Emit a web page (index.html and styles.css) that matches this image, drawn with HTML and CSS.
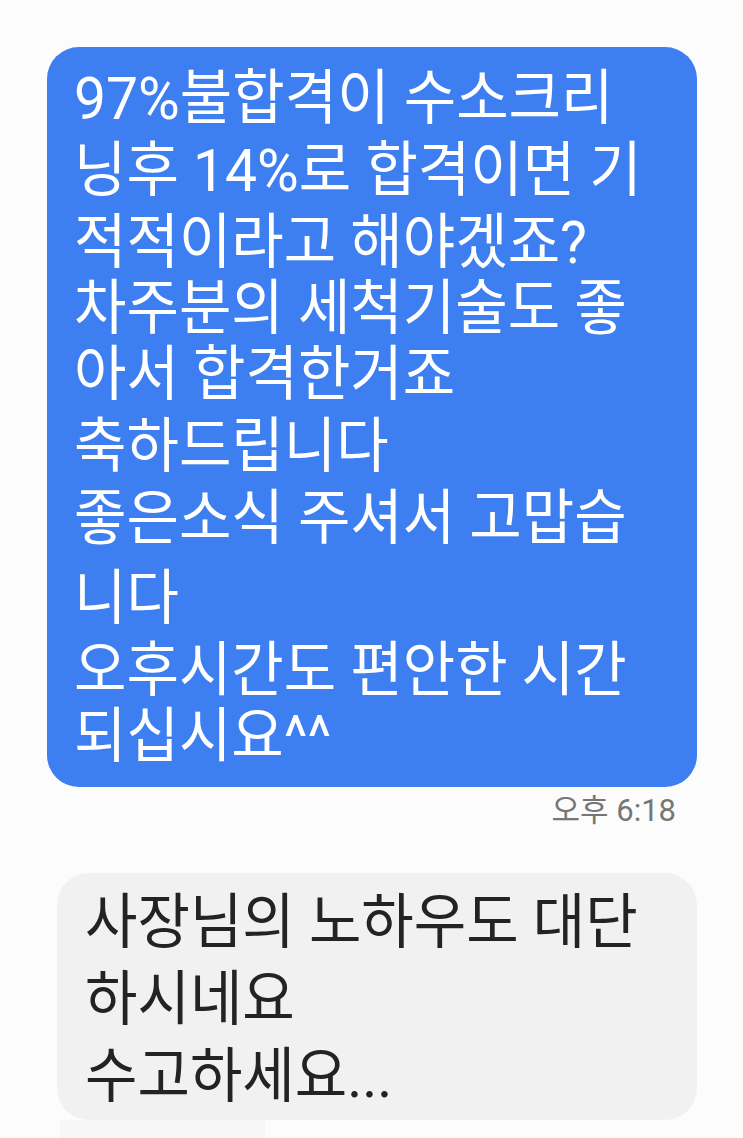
FILE: index.html
```html
<!DOCTYPE html>
<html lang="ko">

<head>
    <meta charset="UTF-8">
    <meta name="viewport" content="width=device-width, initial-scale=1.0">
    <title>문자 대화</title>
    <link rel="stylesheet" href="styles.css">
</head>

<body>

    <div class="chat">

        <!-- Sent message -->
        <div class="bubble sent">
            <div class="line">97%불합격이 수소크리</div>
            <div class="line">닝후 14%로 합격이면 기</div>
            <div class="line tight">적적이라고 해야겠죠?</div>
            <div class="line tight">차주분의 세척기술도 좋</div>
            <div class="line">아서 합격한거죠</div>
            <div class="line">축하드립니다</div>
            <div class="line loose">좋은소식 주셔서 고맙습</div>
            <div class="line">니다</div>
            <div class="line tight">오후시간도 편안한 시간</div>
            <div class="line">되십시요^^</div>
        </div>
        <div class="time">오후 6:18</div>

        <!-- Received message -->
        <div class="bubble received">
            <div class="line">사장님의 노하우도 대단</div>
            <div class="line">하시네요</div>
            <div class="line">수고하세요...</div>
        </div>
        <div class="strip"></div>

    </div>

</body>

</html>
```

FILE: styles.css
```css
html, body {
    margin: 0;
    padding: 0;
    height: 100%;
    overflow: hidden;
}

body {
    background-color: #fcfcfc;
    font-family: Roboto, "Noto Sans CJK KR", sans-serif;
}

.chat {
    display: flex;
    flex-direction: column;
    padding-top: 47px;
}

.bubble {
    box-sizing: border-box;
    border-radius: 32px;
    font-size: 57px;
}

.line {
    white-space: nowrap;
    transform: scaleY(1.05);
}

/* Blue bubble on the right */
.sent {
    margin-left: 47px;
    width: 650px;
    height: 740px;
    padding: 16px 20px 0 27px;
    background-color: #3d7ff0;
    color: #fff;
}

.sent .line {
    height: 72px;
    line-height: 72px;
}

/* the screenshot's lines are not evenly spaced */
.sent .line.tight {
    height: 66px;
}

.sent .line.loose {
    height: 80px;
}

.time {
    align-self: flex-end;
    margin-right: 67px;
    margin-top: 9px;
    height: 30px;
    line-height: 30px;
    font-size: 31px;
    color: #767676;
}

/* Grey bubble on the left */
.received {
    margin-top: 47px;
    margin-left: 57px;
    width: 640px;
    height: 247px;
    padding: 11px 20px 0 28px;
    background-color: #f1f1f1;
    color: #232323;
}

.received .line {
    height: 77px;
    line-height: 77px;
}

.strip {
    margin-left: 60px;
    width: 205px;
    height: 20px;
    background-color: #f7f7f7;
}
```
